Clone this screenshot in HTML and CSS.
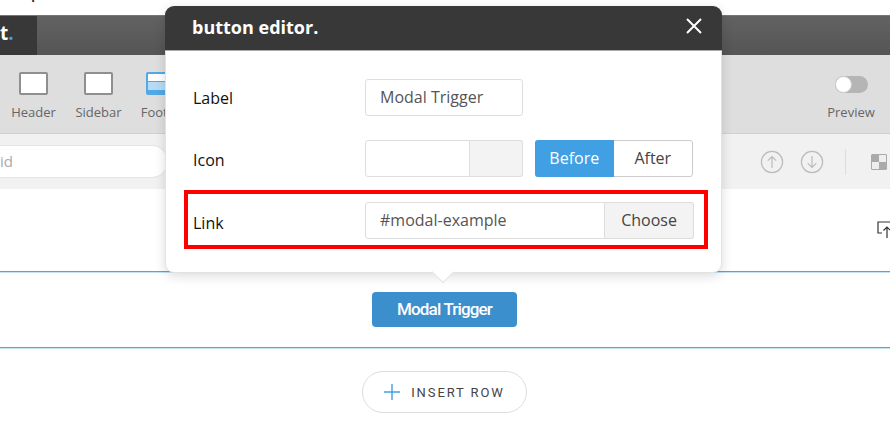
FILE: index.html
```html
<!DOCTYPE html>
<html lang="en">
<head>
    <meta charset="UTF-8">
    <meta name="viewport" content="width=device-width, initial-scale=1.0">
    <title>Button Editor</title>
    <link rel="stylesheet" href="styles.css">
</head>
<body>
    <!-- Page strip above the builder, only a descender shows -->
    <div class="top-strip"><span class="top-text">p</span></div>

    <div class="title-bar">
        <div class="logo">t<span class="logo-dot">.</span></div>
    </div>

    <div class="toolbar">
        <div class="tool">
            <span class="tool-box"></span>
            <span class="tool-name">Header</span>
        </div>
        <div class="tool">
            <span class="tool-box"></span>
            <span class="tool-name">Sidebar</span>
        </div>
        <div class="tool tool-footer">
            <span class="tool-box tool-box-active"><span class="tool-box-fill"></span></span>
            <span class="tool-name">Footer</span>
        </div>
        <div class="tool tool-preview">
            <span class="switch"><span class="switch-knob"></span></span>
            <span class="tool-name">Preview</span>
        </div>
    </div>

    <div class="filter-row">
        <div class="search">id</div>
        <div class="row-actions">
            <svg class="round-icon" viewBox="0 0 24 24"><circle cx="12" cy="12" r="10.6"/><path d="M12 18V6.5M7.8 10.7 12 6.5l4.2 4.2"/></svg>
            <svg class="round-icon" viewBox="0 0 24 24"><circle cx="12" cy="12" r="10.6"/><path d="M12 6v11.5M7.8 13.3l4.2 4.2 4.2-4.2"/></svg>
            <span class="divider"></span>
            <span class="checker"></span>
        </div>
    </div>

    <div class="canvas">
        <div class="upload-line">
            <svg class="upload-icon" viewBox="0 0 16 18"><path d="M5 12H1V1h13v5M10 17V6M6.5 9.5 10 6l3.5 3.5"/></svg>
        </div>
        <div class="button-row">
            <a class="trigger" href="#modal-example">Modal Trigger</a>
        </div>
        <div class="insert-line">
            <button class="insert-row" type="button">
                <svg class="plus" viewBox="0 0 16 16"><path d="M8 0v16M0 8h16"/></svg>
                INSERT ROW
            </button>
        </div>
    </div>

    <!-- Button editor dialog -->
    <div class="dialog">
        <div class="dialog-head">
            <span class="dialog-title">button editor.</span>
            <svg class="dialog-close" viewBox="0 0 16 16"><path d="M1 1l14 14M15 1 1 15"/></svg>
        </div>
        <div class="dialog-body">
            <div class="form-row">
                <label class="form-label">Label</label>
                <div class="field field-label">Modal Trigger</div>
            </div>
            <div class="form-row">
                <label class="form-label form-label-icon">Icon</label>
                <div class="field-group field-group-icon">
                    <div class="field field-flex"></div>
                    <div class="addon addon-icon"></div>
                </div>
                <div class="segments">
                    <span class="segment segment-on">Before</span>
                    <span class="segment">After</span>
                </div>
            </div>
            <div class="form-row form-row-marked">
                <label class="form-label form-label-link">Link</label>
                <div class="field-group field-group-link">
                    <div class="field field-flex">#modal-example</div>
                    <div class="addon addon-choose">Choose</div>
                </div>
            </div>
        </div>
        <span class="dialog-caret"></span>
    </div>
</body>
</html>
```

FILE: styles.css
```css
* {
    box-sizing: border-box;
}

html,
body {
    margin: 0;
    height: 100%;
    overflow: hidden;
}

body {
    position: relative;
    background-color: #fff;
    font-family: "Open Sans", sans-serif;
    color: #444;
}

/* Strip above the builder */
.top-strip {
    height: 15px;
    overflow: hidden;
    padding-left: 31px;
}

.top-text {
    display: block;
    margin-top: -17px;
    font-size: 15px;
    font-weight: 600;
    line-height: 20px;
    color: #222;
}

/* Dark title bar */
.title-bar {
    height: 40px;
    background-image: linear-gradient(#626262, #555);
    border-top: 1px solid #777;
}

.logo {
    width: 37px;
    height: 39px;
    background-color: #383838;
    color: #fff;
    font-size: 19px;
    font-weight: 700;
    line-height: 34px;
}

.logo-dot {
    color: #41a0e4;
}

/* Toolbar */
.toolbar {
    display: flex;
    height: 79px;
    background-color: #dedede;
    border-bottom: 1px solid #d0d0d0;
    padding-top: 17px;
    padding-left: 11px;
    gap: 20px;
}

.tool {
    display: flex;
    flex-direction: column;
    align-items: center;
    width: 45px;
}

.tool-footer {
    margin-left: -3px;
}

.tool-box {
    display: block;
    width: 29px;
    height: 23px;
    background-color: #fff;
    border: 2px solid #8f8f8f;
    border-radius: 2px;
}

.tool-box-active {
    border-color: #52a9e6;
}

.tool-box-fill {
    display: block;
    height: 12px;
    margin-top: 7px;
    background-color: #b6dbf4;
    border-top: 1px solid #52a9e6;
    border-bottom: 3px solid #52a9e6;
}

.tool-name {
    margin-top: 8px;
    font-size: 13px;
    line-height: 18px;
    color: #666;
    white-space: nowrap;
}

.tool-preview {
    margin-left: auto;
    margin-right: 16px;
    width: 46px;
    padding-top: 4px;
}

.switch {
    display: block;
    width: 33px;
    height: 17px;
    border-radius: 9px;
    background-color: #b5b5b5;
}

.switch-knob {
    display: block;
    width: 17px;
    height: 17px;
    border-radius: 50%;
    background-color: #fff;
    border: 1px solid #ccc;
}

.tool-preview .tool-name {
    margin-top: 10px;
}

/* Search and row actions */
.filter-row {
    display: flex;
    align-items: center;
    justify-content: space-between;
    height: 55px;
    background-color: #f1f1f1;
}

.search {
    width: 168px;
    height: 33px;
    background-color: #fff;
    border: 1px solid #e4e4e4;
    border-left: 0;
    border-radius: 0 16px 16px 0;
    font-size: 15px;
    line-height: 31px;
    color: #aaa;
}

.row-actions {
    display: flex;
    align-items: center;
    margin-right: 3px;
}

.round-icon {
    width: 24px;
    height: 24px;
    margin-right: 16px;
    fill: none;
    stroke: #bbb;
    stroke-width: 1.2;
}

.divider {
    width: 1px;
    height: 26px;
    margin-left: 5px;
    margin-right: 25px;
    background-color: #ddd;
}

.checker {
    display: block;
    width: 16px;
    height: 16px;
    border: 1px solid #aaa;
    border-radius: 1px;
    background-color: #eee;
    background-image: linear-gradient(#aaa, #aaa), linear-gradient(#aaa, #aaa);
    background-size: 7px 7px;
    background-position: 0 0, 7px 7px;
    background-repeat: no-repeat;
}

/* Page canvas */
.canvas {
    background-color: #fff;
}

.upload-line {
    display: flex;
    justify-content: flex-end;
    height: 83px;
    padding-top: 32px;
    border-bottom: 1px solid #4aa8e4;
    box-shadow: 0 1px 0 #c4e3f5;
}

.upload-icon {
    width: 16px;
    height: 18px;
    margin-right: -3px;
    fill: none;
    stroke: #333;
    stroke-width: 1.2;
}

.button-row {
    display: flex;
    justify-content: center;
    height: 76px;
    padding-top: 20px;
    padding-right: 1px;
    border-bottom: 1px solid #4aa8e4;
    box-shadow: 0 1px 0 #c4e3f5;
}

.trigger {
    display: block;
    width: 145px;
    height: 35px;
    background-color: #3b8fcd;
    border-radius: 4px;
    color: #fff;
    font-family: Roboto, sans-serif;
    font-size: 17px;
    font-weight: 500;
    line-height: 35px;
    text-align: center;
    text-decoration: none;
    letter-spacing: -0.85px;
}

.insert-line {
    display: flex;
    justify-content: center;
    padding-top: 23px;
    padding-right: 1px;
}

.insert-row {
    display: flex;
    align-items: center;
    justify-content: center;
    width: 165px;
    height: 42px;
    background-color: #fff;
    border: 1px solid #ddd;
    border-radius: 21px;
    font-family: Roboto, sans-serif;
    font-size: 13px;
    letter-spacing: 1.9px;
    color: #444;
}

.plus {
    width: 16px;
    height: 16px;
    margin-right: 11px;
    fill: none;
    stroke: #41a0e4;
    stroke-width: 1.4;
}

/* Dialog over the builder */
.dialog {
    position: absolute;
    top: 6px;
    left: 165px;
    width: 557px;
    height: 267px;
    background-color: #fff;
    border: 1px solid #e2e2e2;
    border-top: 0;
    border-radius: 9px;
    box-shadow: 0 3px 12px rgba(0, 0, 0, 0.14);
}

.dialog-head {
    display: flex;
    align-items: center;
    justify-content: space-between;
    height: 45px;
    margin: 0 -1px;
    padding: 0 20px 2px 27px;
    background-color: #383838;
    border-bottom: 1px solid #aaa;
    border-radius: 9px 9px 0 0;
}

.dialog-title {
    color: #fff;
    font-size: 18px;
    font-weight: 700;
}

.dialog-close {
    width: 16px;
    height: 16px;
    margin-bottom: 2px;
    fill: none;
    stroke: #fff;
    stroke-width: 2;
}

.dialog-body {
    padding: 28px 27px 0;
}

.form-row {
    display: flex;
    align-items: center;
    height: 37px;
    margin-bottom: 24px;
}

.form-label {
    width: 172px;
    color: #111;
    font-size: 16px;
}

.form-label-icon {
    margin-top: 2px;
}

.form-label-link {
    margin-top: 5px;
}

.form-row-marked {
    width: 524px;
    height: 59px;
    margin: -11px 0 0 -9px;
    padding: 2px 0 0 5px;
    border: 4px solid #f00;
}

.field {
    height: 37px;
    padding: 0 14px;
    background-color: #fff;
    border: 1px solid #ddd;
    border-radius: 3px;
    font-size: 16px;
    line-height: 35px;
    color: #555;
}

.field-label {
    width: 158px;
}

.field-group {
    display: flex;
}

.field-group-icon {
    width: 158px;
}

.field-group-link {
    width: 329px;
}

.field-flex {
    flex: 1;
    border-radius: 3px 0 0 3px;
}

.addon {
    height: 37px;
    background-color: #f3f3f3;
    border: 1px solid #ddd;
    border-left: 0;
    border-radius: 0 3px 3px 0;
    font-size: 16px;
    line-height: 35px;
    text-align: center;
    color: #444;
}

.addon-icon {
    width: 53px;
}

.addon-choose {
    width: 89px;
}

.segments {
    display: flex;
    width: 158px;
    height: 37px;
    margin-left: 12px;
    border: 1px solid #ccc;
    border-radius: 3px;
}

.segment {
    flex: 1;
    font-size: 16px;
    line-height: 35px;
    text-align: center;
    color: #444;
}

.segment-on {
    margin: -1px 0 -1px -1px;
    padding-top: 1px;
    background-color: #41a0e4;
    border-radius: 3px 0 0 3px;
    color: #fff;
}

.dialog-caret {
    position: absolute;
    left: 269px;
    bottom: -8px;
    width: 16px;
    height: 16px;
    background-color: #fff;
    border-right: 1px solid #e2e2e2;
    border-bottom: 1px solid #e2e2e2;
    transform: rotate(45deg);
}
```
